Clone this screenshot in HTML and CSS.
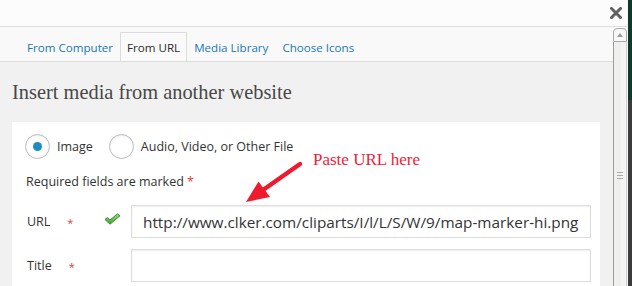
FILE: index.html
```html
<!DOCTYPE html>
<html lang="en">
<head>
    <meta charset="UTF-8">
    <meta name="viewport" content="width=device-width, initial-scale=1.0">
    <title>Insert media</title>
    <link rel="stylesheet" href="styles.css">
</head>
<body>

    <div class="window">
        <div class="app">
            <header class="topbar">
                <button class="close" aria-label="Close">
                    <svg width="12" height="12" viewBox="0 0 12 12">
                        <path d="M1.5 1.5 L10.5 10.5 M10.5 1.5 L1.5 10.5" stroke="#5f6163" stroke-width="3" stroke-linecap="square"/>
                    </svg>
                </button>
            </header>

            <div class="frame">
                <div class="main">
                    <nav class="tabs">
                        <a class="tab" href="#">From Computer</a>
                        <a class="tab active" href="#">From URL</a>
                        <a class="tab" href="#">Media Library</a>
                        <a class="tab" href="#">Choose Icons</a>
                    </nav>

                    <div class="content">
                        <h3 class="title">Insert media from another website</h3>

                        <div class="panel">
                            <div class="types">
                                <label class="type"><span class="radio checked"></span>Image</label>
                                <label class="type"><span class="radio"></span>Audio, Video, or Other File</label>
                            </div>

                            <p class="required">Required fields are marked <span class="req">*</span></p>

                            <div class="field">
                                <span class="field-label">URL<span class="star">*</span></span>
                                <span class="status">
                                    <svg width="17" height="12" viewBox="0 0 17 12">
                                        <defs>
                                            <linearGradient id="ok" x1="0" y1="0" x2="0" y2="1">
                                                <stop offset="0" stop-color="#9be07f"/>
                                                <stop offset="1" stop-color="#3fa52c"/>
                                            </linearGradient>
                                        </defs>
                                        <path d="M1 6.5 L3.5 4.5 L6 7 L13.5 0.8 L16 2.8 L6 11.2 Z" fill="url(#ok)" stroke="#2f7d22" stroke-width="0.9" stroke-linejoin="round"/>
                                    </svg>
                                </span>
                                <input class="field-input" type="text" value="http://www.clker.com/cliparts/I/l/L/S/W/9/map-marker-hi.png">
                            </div>

                            <div class="field">
                                <span class="field-label">Title<span class="star">*</span></span>
                                <span class="status"></span>
                                <input class="field-input" type="text">
                            </div>
                        </div>
                    </div>
                </div>

                <div class="scrollbar">
                    <div class="scroll-up"></div>
                    <div class="scroll-thumb"><span class="grip"></span></div>
                </div>
            </div>
        </div>
        <div class="edge"></div>

        <!-- пояснення поверх скріншоту -->
        <div class="note">Paste URL here</div>
        <svg class="arrow" width="632" height="286" viewBox="0 0 632 286">
            <line x1="300" y1="164" x2="263" y2="190" stroke="#ee1b2e" stroke-width="4.5" stroke-linecap="round"/>
            <polygon points="246,202 258.5,181.5 270,197" fill="#ee1b2e"/>
        </svg>
    </div>

</body>
</html>
```

FILE: styles.css
```css
body {
    margin: 0;
    width: 632px;
    height: 286px;
    overflow: hidden;
    font-family: 'Open Sans', 'Noto Sans', sans-serif;
    background: #fcfcfc;
}

.window {
    position: relative;
    display: flex;
    width: 632px;
    height: 286px;
    overflow: hidden;
}

.app {
    width: 627px;
    display: flex;
    flex-direction: column;
}

.edge {
    width: 5px;
    border-left: 1px solid #f4f4f4;
    box-sizing: border-box;
    background: linear-gradient(#0c3a2c 0, #0c3a2c 100px, #3b3b3b 100px);
}

/* Верхня смуга */
.topbar {
    flex-shrink: 0;
    height: 26px;
    background: #fcfcfc;
    border-bottom: 1px solid #dedede;
    display: flex;
    justify-content: flex-end;
    align-items: center;
    padding-right: 5px;
}

.close {
    background: none;
    border: none;
    padding: 0;
    width: 12px;
    height: 12px;
    cursor: pointer;
}

.close svg {
    display: block;
}

.frame {
    flex: 1;
    display: flex;
    min-height: 0;
    overflow: hidden;
}

.main {
    flex: 1;
    display: flex;
    flex-direction: column;
    background: #f1f1f1;
    overflow: hidden;
}

/* Вкладки */
.tabs {
    flex-shrink: 0;
    height: 35px;
    box-sizing: border-box;
    display: flex;
    align-items: flex-end;
    padding-left: 20px;
    background: #f9f9f9;
    border-bottom: 1px solid #dcdcdc;
}

.tab {
    height: 28px;
    line-height: 29px;
    padding: 0 6px;
    border: 1px solid transparent;
    border-bottom: none;
    font-size: 11.6px;
    color: #1a78b4;
    text-decoration: none;
}

.tab.active {
    color: #2b2b2b;
    background: #fafafa;
    border-color: #dcdcdc;
}

.content {
    flex-shrink: 0;
    padding: 0 13px 0 12px;
}

.title {
    margin: 18px 0 18px;
    font-family: 'Liberation Serif', 'Times New Roman', serif;
    font-weight: normal;
    font-size: 20.4px;
    line-height: 24px;
    color: #484848;
}

/* Біла панель */
.panel {
    background: #fff;
    padding: 12px 9px 20px 13px;
    color: #333;
    font-size: 12.5px;
}

.types {
    display: flex;
    align-items: center;
    height: 25px;
}

.type {
    display: flex;
    align-items: center;
    margin-right: 16px;
    cursor: pointer;
}

.radio {
    width: 25px;
    height: 25px;
    box-sizing: border-box;
    border: 1px solid #b8bcbf;
    border-radius: 50%;
    box-shadow: inset 0 1px 2px rgba(0, 0, 0, 0.08);
    margin-right: 7px;
    display: flex;
    justify-content: center;
    align-items: center;
}

.radio.checked::after {
    content: "";
    width: 9px;
    height: 9px;
    border-radius: 50%;
    background: #1e8cbe;
}

.required {
    margin: 14px 0 15px 1px;
    line-height: 17px;
}

.req {
    color: #dd3d36;
}

.field {
    display: grid;
    grid-template-columns: 77px 27px 1fr;
    align-items: center;
    margin-left: 2px;
    margin-bottom: 11px;
}

.field-label {
    display: flex;
    align-items: center;
}

.star {
    color: #e0413a;
    font-size: 11px;
    margin-left: 17px;
    position: relative;
    top: 1px;
}

.status svg {
    display: block;
    margin-top: -5px;
}

.field-input {
    height: 33px;
    box-sizing: border-box;
    border: 1px solid #dddddd;
    box-shadow: inset 0 1px 2px rgba(0, 0, 0, 0.07);
    padding: 1px 0 0 11px;
    font-family: 'Open Sans', 'Noto Sans', sans-serif;
    font-size: 15.3px;
    color: #333;
    outline: none;
    min-width: 0;
}

/* Смуга прокрутки */
.scrollbar {
    width: 14px;
    display: flex;
    flex-direction: column;
    background: #fcfcfc;
}

.scroll-up {
    flex-shrink: 0;
    height: 14px;
    margin-top: 1px;
    box-sizing: border-box;
    border: 1px solid #a9a9a9;
    border-radius: 4px 4px 0 0;
    background: #f7f7f7;
    display: flex;
    justify-content: center;
    align-items: center;
}

.scroll-up::after {
    content: "";
    border-left: 3px solid transparent;
    border-right: 3px solid transparent;
    border-bottom: 4px solid #9a9a9a;
}

.scroll-thumb {
    flex: 1;
    box-sizing: border-box;
    border-left: 1px solid #9c9c9c;
    border-right: 1px solid #cfcfcf;
    background: linear-gradient(90deg, #efefef 0, #efefef 7px, #f5f4f2 7px);
    display: flex;
    justify-content: center;
    align-items: flex-start;
    padding-top: 130px;
}

.grip {
    width: 6px;
    height: 7px;
    box-sizing: border-box;
    border-top: 1px solid #aaa;
    border-bottom: 1px solid #aaa;
    position: relative;
}

.grip::after {
    content: "";
    position: absolute;
    left: 0;
    right: 0;
    top: 2px;
    border-top: 1px solid #aaa;
}

/* Пояснення */
.note {
    position: absolute;
    left: 313px;
    top: 150px;
    font-family: 'Liberation Serif', 'Times New Roman', serif;
    font-size: 17px;
    line-height: 20px;
    color: #ec1d3a;
}

.arrow {
    position: absolute;
    left: 0;
    top: 0;
    pointer-events: none;
}
```
